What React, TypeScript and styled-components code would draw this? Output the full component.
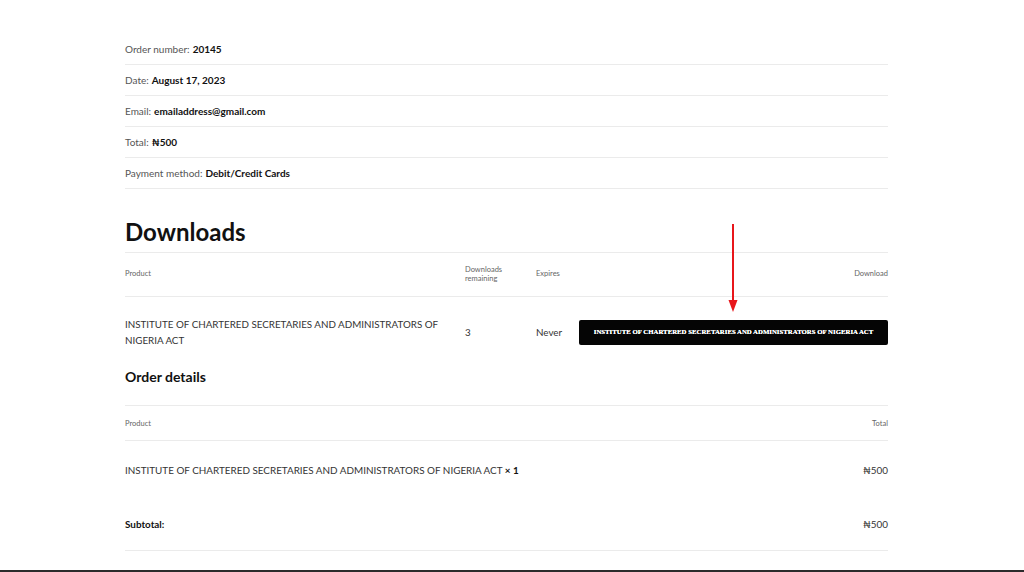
import React from 'react';
import { styled, createGlobalStyle } from 'styled-components';

const GlobalStyle = createGlobalStyle`
  html, body {
    margin: 0;
    padding: 0;
    background: #fff;
  }
  body {
    font-family: Lato, "Open Sans", sans-serif;
    color: #333;
  }
`;

const Page = styled.div`
  position: relative;
  height: 572px;
  padding: 34px 136px 0 125px;
  box-sizing: border-box;
  border-bottom: 2px solid #2b2b2b;
  overflow: hidden;
`;

const MetaList = styled.ul`
  list-style: none;
  margin: 0;
  padding: 0;
`;

const MetaItem = styled.li`
  height: 31px;
  box-sizing: border-box;
  display: flex;
  align-items: center;
  border-bottom: 1px solid #ebebeb;
  font-size: 10px;
  color: #555;

  strong {
    margin-left: 3px;
    color: #111;
    font-weight: 700;
  }
`;

const Heading = styled.h2`
  margin: 28px 0 6px;
  font-size: 24px;
  line-height: 29px;
  font-weight: 700;
  color: #111;
`;

const SubHeading = styled.h3`
  margin: 0;
  padding-bottom: 19px;
  font-size: 14px;
  line-height: 18px;
  font-weight: 700;
  color: #111;
  border-bottom: 1px solid #ebebeb;
`;

const DownloadRow = styled.div<{ $head?: boolean }>`
  display: grid;
  grid-template-columns: 340px 71px 43px 1fr;
  align-items: center;
  height: ${(p) => (p.$head ? '45px' : '71px')};
  border-top: ${(p) => (p.$head ? '1px solid #ebebeb' : 'none')};
  border-bottom: ${(p) => (p.$head ? '1px solid #ebebeb' : 'none')};
  box-sizing: border-box;
  font-size: ${(p) => (p.$head ? '7.5px' : '9.8px')};
  color: ${(p) => (p.$head ? '#666' : '#333')};
`;

const Cell = styled.div<{ $right?: boolean }>`
  text-align: ${(p) => (p.$right ? 'right' : 'left')};
  line-height: 1.55;
  padding-right: 16px;

  &:last-child {
    padding-right: 0;
  }
`;

const HeadCell = styled(Cell)`
  line-height: 1.15;
`;

const DownloadButton = styled.a`
  display: flex;
  align-items: center;
  justify-content: center;
  height: 25px;
  background: #050505;
  border-radius: 2px;
  color: #fff;
  font-family: "Liberation Serif", serif;
  font-weight: 700;
  font-size: 6.8px;
  text-transform: uppercase;
  text-decoration: none;
  white-space: nowrap;
  text-shadow: 0 0 0.5px #fff;
`;

const DetailsRow = styled.div<{ $height: number; $head?: boolean; $line?: boolean }>`
  display: flex;
  align-items: center;
  justify-content: space-between;
  height: ${(p) => p.$height}px;
  border-bottom: ${(p) => (p.$line ? '1px solid #ebebeb' : 'none')};
  box-sizing: border-box;
  font-size: ${(p) => (p.$head ? '7.5px' : '9.9px')};
  color: ${(p) => (p.$head ? '#666' : '#333')};

  strong {
    color: #111;
    font-weight: 700;
  }
`;

const Arrow = styled.svg`
  position: absolute;
  left: 727px;
  top: 222px;
`;

function App() {
  const product = 'INSTITUTE OF CHARTERED SECRETARIES AND ADMINISTRATORS OF NIGERIA ACT';

  return (
    <>
      <GlobalStyle />
      <Page>
        <MetaList>
          <MetaItem>Order number: <strong>20145</strong></MetaItem>
          <MetaItem>Date: <strong>August 17, 2023</strong></MetaItem>
          <MetaItem>Email: <strong>emailaddress@gmail.com</strong></MetaItem>
          <MetaItem>Total: <strong>₦500</strong></MetaItem>
          <MetaItem>Payment method: <strong>Debit/Credit Cards</strong></MetaItem>
        </MetaList>

        <Heading>Downloads</Heading>
        <DownloadRow $head>
          <HeadCell>Product</HeadCell>
          <HeadCell>Downloads<br />remaining</HeadCell>
          <HeadCell>Expires</HeadCell>
          <HeadCell $right>Download</HeadCell>
        </DownloadRow>
        <DownloadRow>
          <Cell>{product}</Cell>
          <Cell>3</Cell>
          <Cell>Never</Cell>
          <Cell>
            <DownloadButton href="#">{product}</DownloadButton>
          </Cell>
        </DownloadRow>

        <SubHeading>Order details</SubHeading>
        <DetailsRow $height={35} $head $line>
          <span>Product</span>
          <span>Total</span>
        </DetailsRow>
        <DetailsRow $height={57}>
          <span>{product} <strong>× 1</strong></span>
          <span>₦500</span>
        </DetailsRow>
        <DetailsRow $height={53} $line>
          <strong>Subtotal:</strong>
          <span>₦500</span>
        </DetailsRow>

        <Arrow width="12" height="92" viewBox="0 0 12 92">
          <line x1="6" y1="2" x2="6" y2="80" stroke="#e8161b" strokeWidth="2" />
          <polygon points="1.5,78 10.5,78 6,90" fill="#e8161b" />
        </Arrow>
      </Page>
    </>
  );
}

export default App;
